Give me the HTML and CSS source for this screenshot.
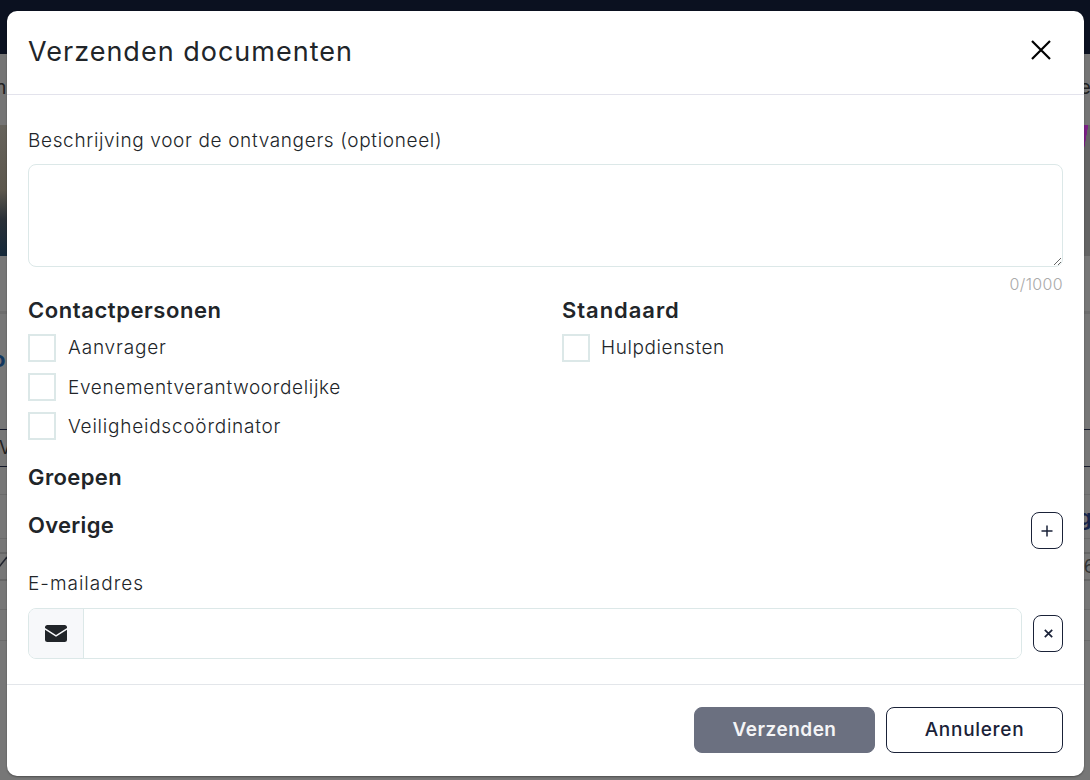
FILE: index.html
```html
<!DOCTYPE html>
<html lang="nl">
<head>
<meta charset="utf-8">
<title>Verzenden documenten</title>
<link rel="stylesheet" href="styles.css">
</head>
<body>
<div class="page" aria-hidden="true">
  <div class="topbar"></div>
  <div class="nav"><span>m</span><span>e</span></div>
  <div class="hero"><div class="hero-left"></div><div class="hero-right"></div></div>
  <div class="strip s1"></div>
  <div class="strip s2"><span class="frag-o">o</span></div>
  <div class="strip s3"><span class="frag-v">V</span></div>
  <div class="strip s4"></div>
  <div class="strip s5"><span></span><span class="frag-g">g</span></div>
  <div class="strip s6"></div>
  <div class="strip s7">
    <svg class="frag-check" width="7" height="14" viewBox="0 0 7 14"><path d="M-1 13 7 3" fill="none" stroke="#20232e" stroke-width="1.500"/></svg>
    <span class="frag-6">6</span>
  </div>
  <div class="strip s8"></div>
  <div class="strip s9"></div>
  <div class="strip s10"></div>
</div>
<div class="modal" role="dialog">
  <header class="modal-head">
    <h1 class="title">Verzenden documenten</h1>
    <button class="close" aria-label="Sluiten">
      <svg width="20" height="20" viewBox="0 0 20 20"><path d="M1 1 19 19M19 1 1 19" fill="none" stroke="#000" stroke-width="2.2"/></svg>
    </button>
  </header>
  <div class="modal-body">
    <label class="label label-desc">Beschrijving voor de ontvangers (optioneel)</label>
    <textarea class="textarea"></textarea>
    <div class="counter">0/1000</div>
    <div class="cols">
      <section class="col">
        <h2 class="heading h-contact">Contactpersonen</h2>
        <label class="check"><span class="box"></span><span class="check-text t-a">Aanvrager</span></label>
        <label class="check"><span class="box"></span><span class="check-text t-e">Evenementverantwoordelijke</span></label>
        <label class="check"><span class="box"></span><span class="check-text t-v">Veiligheidscoördinator</span></label>
      </section>
      <section class="col">
        <h2 class="heading h-standard">Standaard</h2>
        <label class="check"><span class="box"></span><span class="check-text t-h">Hulpdiensten</span></label>
      </section>
    </div>
    <h2 class="heading h-groepen">Groepen</h2>
    <div class="overige">
      <h2 class="heading h-overige">Overige</h2>
      <button class="icon-btn add" aria-label="Toevoegen">
        <svg width="12" height="12" viewBox="0 0 12 12"><path d="M6 .5V11.5M.5 6H11.5" fill="none" stroke="#1a2238" stroke-width="1.5"/></svg>
      </button>
    </div>
    <label class="label label-mail">E-mailadres</label>
    <div class="mail-row">
      <div class="input-group">
        <span class="addon">
          <svg width="22" height="17" viewBox="0 0 22 17"><path d="M2.500 0h17A2.500 2.500 0 0 1 22 2.500v.6L11 10 0 3.100v-.6A2.500 2.500 0 0 1 2.500 0Z" fill="#212529"/><path d="M0 4.800 11 11.700 22 4.800v9.700A2.500 2.500 0 0 1 19.500 17h-17A2.500 2.500 0 0 1 0 14.500Z" fill="#212529"/></svg>
        </span>
        <input class="mail-input" type="text">
      </div>
      <button class="icon-btn remove" aria-label="Verwijderen">
        <svg width="9" height="9" viewBox="0 0 9 9"><path d="M.8.800 8.200 8.200M8.200.800.800 8.200" fill="none" stroke="#1a2238" stroke-width="1.700"/></svg>
      </button>
    </div>
  </div>
  <footer class="modal-foot">
    <button class="btn btn-primary">Verzenden</button>
    <button class="btn btn-secondary">Annuleren</button>
  </footer>
</div>
</body>
</html>
```

FILE: styles.css
```css
* { box-sizing: border-box; }
html, body { margin: 0; height: 100%; overflow: hidden; }
body { font-family: Inter, "Liberation Sans", sans-serif; color: #212529; background: #777; }

.page { height: 780px; display: flex; flex-direction: column; overflow: hidden; }
.topbar { height: 54px; background: #0b1120; flex: none; }
.nav { height: 71px; flex: none; background: #757575; display: flex; justify-content: space-between; align-items: center; font-size: 20px; color: #222; }
.nav span:first-child { margin-left: -11px; padding-bottom: 6px; }
.nav span:last-child { margin-right: -1px; padding-bottom: 6px; }
.hero { height: 131px; flex: none; display: flex; justify-content: space-between; background: #666; }
.hero-left { width: 7px; background: linear-gradient(#66635c 0%, #5c574d 50%, #2a3037 72%, #15293a 100%); }
.hero-right { width: 6px; background-color: #646464; background-image: linear-gradient(100deg, #7b1f86 0, #7b1f86 40%, transparent 44%); background-size: 100% 24px; background-repeat: no-repeat; }
.strip { display: flex; justify-content: space-between; align-items: center; background: #777; border-bottom: 1px solid #6b6b6b; font-size: 22px; overflow: hidden; flex: none; }
.s1 { height: 58px; border-bottom: 3px solid #6d6d6d; }
.s2 { height: 116px; border-bottom-color: #15192a; align-items: flex-start; }
.s3 { height: 37px; border-bottom-color: #15192a; font-size: 18px; }
.s4 { height: 28px; }
.s5 { height: 44px; }
.s6 { height: 15px; border-bottom: 2px solid #666; }
.s7 { height: 27px; border-bottom: 2px solid #666; font-size: 18px; }
.s8 { height: 29px; }
.s9 { height: 31px; }
.s10 { height: 139px; border-bottom: 0; }
.frag-o { margin: 32px 0 0 -8px; color: #12375f; font-weight: 700; }
.frag-v { margin-left: -1px; color: #222; line-height: 1; }
.frag-g { margin-right: -2px; color: #16244a; font-weight: 700; }
.frag-6 { margin-right: -5px; color: #333; }
.frag-check { margin-top: -12px; }

.modal { position: absolute; left: 7px; top: 11px; width: 1077px; height: 765px; background: #fff; border-radius: 10px; display: flex; flex-direction: column; box-shadow: 0 1px 2px rgba(0,0,0,.35); }
.modal-head { height: 84px; border-bottom: 1px solid #e3e3ec; padding: 0 32px 0 21px; display: flex; align-items: center; justify-content: space-between; flex: none; }
.title { margin: 0; font-size: 27px; line-height: 36px; font-weight: 400; letter-spacing: 1px; color: #212529; padding-bottom: 1px; }
.close { width: 22px; height: 22px; padding: 1px; border: 0; background: none; display: flex; margin-bottom: 6px; }

.modal-body { flex: 1; padding: 32px 21px 0 21px; display: flex; flex-direction: column; }
.label { display: block; height: 27px; line-height: 27px; font-size: 19px; font-weight: 300; color: #212529; }
.label-desc { letter-spacing: .65px; margin-bottom: 10px; }
.textarea { display: block; width: 100%; height: 103px; border: 1px solid #dce8e8; border-radius: 8px; resize: vertical; outline: 0; background: #fff; padding: 8px; flex: none; }
.counter { margin-top: 5px; height: 24px; line-height: 24px; text-align: right; font-size: 16px; font-weight: 300; letter-spacing: .35px; color: #aaa; }
.cols { display: grid; grid-template-columns: 534px 1fr; margin-top: 1px; }
.col { display: flex; flex-direction: column; }
.heading { margin: 0; height: 27px; line-height: 27px; font-size: 22px; font-weight: 600; color: #212529; }
.col .heading { margin-bottom: 10px; }
.h-contact { letter-spacing: .57px; }
.h-standard { letter-spacing: .95px; }
.h-groepen { margin-top: 24px; letter-spacing: .4px; }
.h-overige { letter-spacing: .3px; }
.check { display: flex; align-items: center; gap: 12px; height: 28px; margin-bottom: 11px; }
.check:last-child { margin-bottom: 0; }
.box { width: 28px; height: 28px; border: 2px solid #dce8e8; flex: none; }
.check-text { font-size: 19px; font-weight: 300; line-height: 27px; color: #212529; }
.t-a { letter-spacing: .84px; padding-bottom: 1px; }
.t-e { letter-spacing: .66px; }
.t-v { letter-spacing: .77px; }
.t-h { letter-spacing: .6px; margin-left: -1px; padding-bottom: 1px; }
.overige { display: flex; justify-content: space-between; align-items: flex-start; margin-top: 21px; height: 37px; }
.icon-btn { display: flex; align-items: center; justify-content: center; height: 37px; padding: 0; background: #fff; border: 1px solid #1a2238; border-radius: 8px; flex: none; }
.add { width: 32px; }
.remove { width: 30px; }
.label-mail { margin-top: 21px; margin-bottom: 11px; letter-spacing: 1px; }
.mail-row { display: flex; align-items: center; gap: 11px; }
.input-group { flex: 1; height: 51px; display: flex; border: 1px solid #dce8e8; border-radius: 8px; overflow: hidden; }
.addon { width: 55px; flex: none; display: flex; align-items: center; justify-content: center; background: #f7f8fa; border-right: 1px solid #dce8e8; }
.mail-input { flex: 1; min-width: 0; border: 0; outline: 0; background: #fff; }

.modal-foot { flex: none; height: 92px; border-top: 1px solid #e3e6ea; padding: 22px 21px 0 0; display: flex; justify-content: flex-end; gap: 11px; }
.btn { height: 46px; font-family: inherit; font-size: 19px; font-weight: 600; border-radius: 8px; padding: 0 0 2px; }
.btn-primary { width: 181px; background: #6b7080; border: 1px solid #6b7080; color: #f4f4f6; letter-spacing: .5px; }
.btn-secondary { width: 177px; background: #fff; border: 1px solid #1a2238; color: #1a2238; font-weight: 500; letter-spacing: .7px; }
```
